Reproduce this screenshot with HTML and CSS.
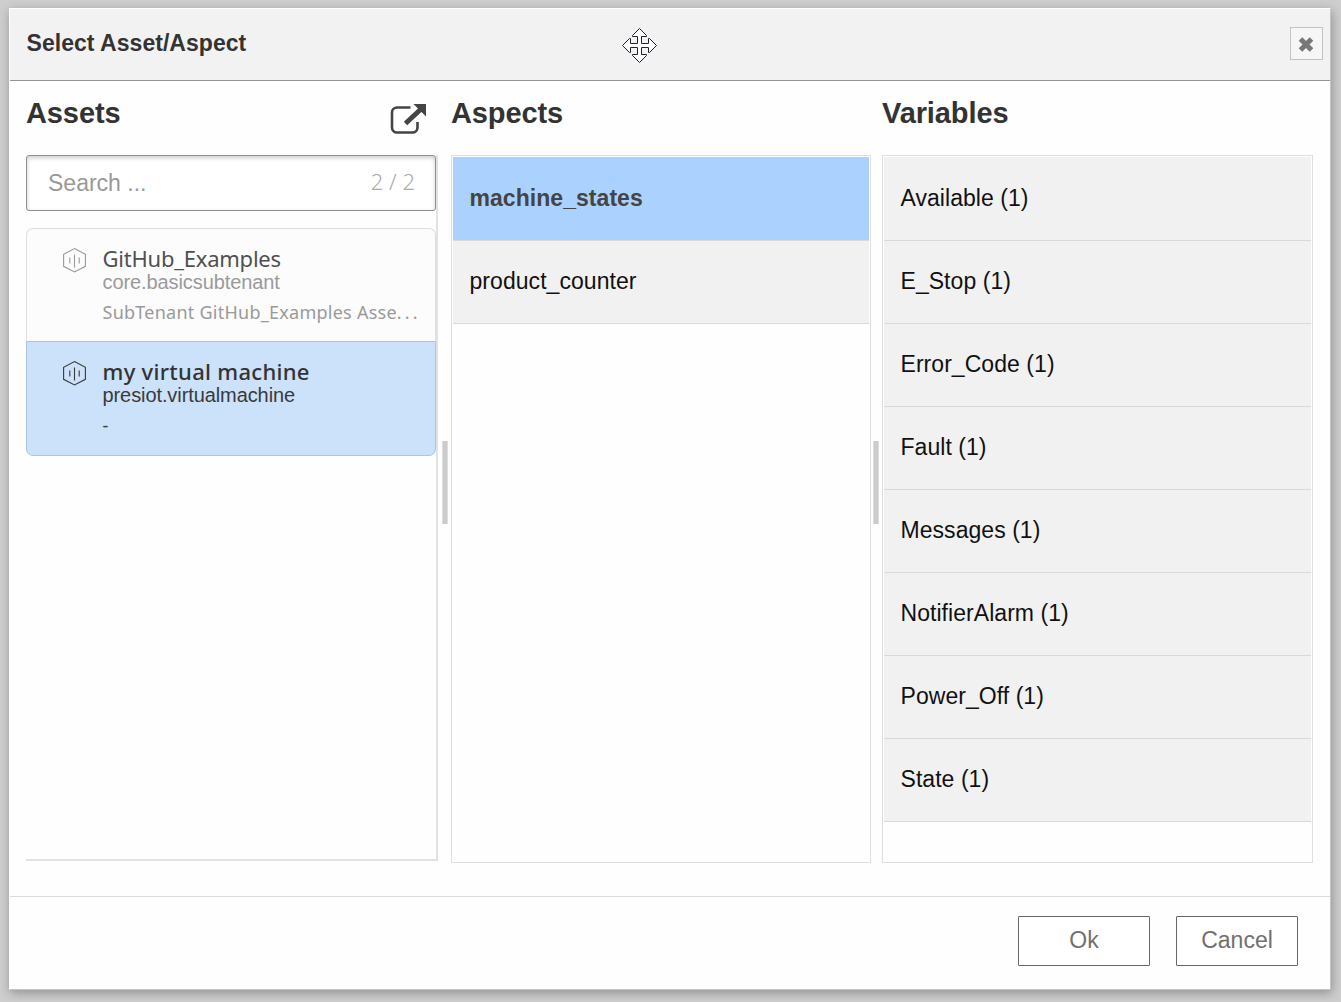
FILE: index.html
```html
<!DOCTYPE html>
<html lang="en">
<head>
<meta charset="utf-8">
<title>Select Asset/Aspect</title>
<link rel="stylesheet" href="styles.css">
</head>
<body>
<div class="dialog">
  <header class="dialog-header">
    <h1 class="dialog-title">Select Asset/Aspect</h1>
    <svg class="move-cursor" width="35" height="35" viewBox="0 0 35 35"><path d="M17.5.5 24.5 7.5V8.500H19.500V15.500H26.500V10.500H27.500L34.500 17.500 27.500 24.500H26.500V19.500H19.500V26.500H24.500V27.500L17.500 34.500 10.500 27.500V26.500H15.500V19.500H8.500V24.500H7.500L.5 17.500 7.500 10.500H8.500V15.500H15.500V8.500H10.500V7.500Z"/></svg>
    <button class="close" aria-label="Close"><svg width="17" height="17" viewBox="0 0 17 17"><path d="M2.500 3 13.500 14M13.500 3 2.500 14"/></svg></button>
  </header>
  <main class="dialog-body">
    <section class="column assets">
      <div class="column-head">
        <h2 class="column-title">Assets</h2>
        <svg class="open-icon" width="37" height="32" viewBox="0 0 37 32"><path class="frame" d="M20.500 4.500H7a5 5 0 0 0-5 5V24.500a5 5 0 0 0 5 5H22.500a5 5 0 0 0 5-5V19"/><path class="shaft" d="M15.500 20.500 30.500 6.500"/><path class="tip" d="M23.500 1H36V13.500Z"/></svg>
      </div>
      <div class="asset-panel">
        <div class="search"><span>Search ...</span><span class="count">2 / 2</span></div>
        <div class="asset-list">
          <article class="asset">
            <svg class="asset-icon" width="24" height="26" viewBox="0 0 24 26"><path d="M12.500 1.600 23.400 7.300V19.300L12.500 25 1.600 19.300V7.300ZM7.800 10.500V16.500M12.500 7.500V20.500M17.200 10.500V16.500"/></svg>
            <div class="asset-text">
              <div class="asset-name">GitHub_Examples</div>
              <div class="asset-type">core.basicsubtenant</div>
              <div class="asset-note">SubTenant GitHub_Examples Asse<span class="dots">...</span></div>
            </div>
          </article>
          <article class="asset selected">
            <svg class="asset-icon" width="24" height="26" viewBox="0 0 24 26"><path d="M12.500 1.600 23.400 7.300V19.300L12.500 25 1.600 19.300V7.300ZM7.800 10.500V16.500M12.500 7.500V20.500M17.200 10.500V16.500"/></svg>
            <div class="asset-text">
              <div class="asset-name">my virtual machine</div>
              <div class="asset-type">presiot.virtualmachine</div>
              <div class="asset-note">-</div>
            </div>
          </article>
        </div>
      </div>
    </section>
    <div class="splitter"><i></i></div>
    <section class="column aspects">
      <div class="column-head"><h2 class="column-title">Aspects</h2></div>
      <ul class="list">
        <li class="row selected">machine_states</li>
        <li class="row">product_counter</li>
      </ul>
    </section>
    <div class="splitter narrow"><i></i></div>
    <section class="column variables">
      <div class="column-head"><h2 class="column-title">Variables</h2></div>
      <ul class="list">
        <li class="row">Available (1)</li>
        <li class="row">E_Stop (1)</li>
        <li class="row">Error_Code (1)</li>
        <li class="row">Fault (1)</li>
        <li class="row">Messages (1)</li>
        <li class="row">NotifierAlarm (1)</li>
        <li class="row">Power_Off (1)</li>
        <li class="row">State (1)</li>
      </ul>
    </section>
  </main>
  <footer class="dialog-footer">
    <button class="btn ok">Ok</button>
    <button class="btn cancel">Cancel</button>
  </footer>
</div>
</body>
</html>
```
FILE: styles.css
```css
* { box-sizing: border-box; }
body {
  margin: 0;
  height: 1002px;
  padding: 8px 10px 12px 9px;
  overflow: hidden;
  background: #cecece;
  font-family: "Liberation Sans", Arial, sans-serif;
  font-size: 23px;
  color: #333;
}
h1, h2, ul { margin: 0; padding: 0; }
button { font: inherit; padding: 0; }
.dialog {
  display: flex;
  flex-direction: column;
  width: 1322px;
  height: 982px;
  background: #fefefe;
  border: 1px solid #fff;
  border-right-color: #c4c4c4;
  border-bottom-color: #c4c4c4;
  box-shadow: 1px 3px 10px rgba(0, 0, 0, .3);
}
.dialog-header {
  position: relative;
  display: flex;
  justify-content: space-between;
  height: 72px;
  padding: 18px 7px 0 16.5px;
  background: #f2f2f2;
  border-bottom: 1px solid #959595;
}
.dialog-title { font-size: 23px; line-height: 32px; letter-spacing: .04px; }
.move-cursor { position: absolute; left: 612px; top: 19px; fill: #fff; stroke: #222230; stroke-width: 1; }
.close {
  display: grid;
  place-items: center;
  width: 33px;
  height: 33px;
  padding: 2px 1px 0 0;
  background: #f6f6f6;
  border: 1px solid #c3c3c3;
}
.close svg { display: block; stroke: #777; stroke-width: 5; }
.dialog-body { display: flex; height: 815px; padding-left: 16px; }
.column-head { display: flex; justify-content: space-between; height: 74px; padding-right: 11px; }
.column-title { padding-top: 14px; font-size: 29px; line-height: 36px; letter-spacing: -.1px; }
.open-icon { margin-top: 22px; fill: none; stroke: #444; }
.frame { stroke-width: 2.600; }
.shaft { stroke-width: 5; }
.tip { fill: #444; stroke: none; }
.assets { width: 412px; }
.aspects { width: 420px; }
.variables { width: 431px; }
.asset-panel {
  height: 706px;
  border-right: 2px solid #e2e2e2;
  border-bottom: 2px solid #e2e2e2;
}
.search {
  display: flex;
  justify-content: space-between;
  height: 56px;
  padding: 0 20px 0 21px;
  line-height: 54px;
  color: #999;
  background: #fff;
  border: 1px solid #8e8e8e;
  border-radius: 3px;
  box-shadow: inset 0 2px 4px rgba(0, 0, 0, .2);
}
.count { font-family: "Noto Sans", sans-serif; font-weight: 300; font-size: 22px; line-height: 51px; color: #aaa; }
.asset-list { margin-top: 17px; }
.asset {
  display: flex;
  height: 113px;
  padding: 17px 0 0 35px;
  background: #fcfcfc;
  border: 1px solid #dedede;
  border-bottom: 0;
  border-radius: 7px 7px 0 0;
  color: #9a9a9a;
}
.asset.selected {
  height: 115px;
  background: #cce1fa;
  border: 1px solid #a9c6e3;
  border-radius: 0 0 7px 7px;
  color: #3a3a3a;
}
.asset-icon { flex: none; margin-top: 1px; fill: none; stroke: currentColor; stroke-width: 1.100; }
.asset-text { margin-left: 16.5px; white-space: nowrap; }
.asset-name {
  font-family: "Noto Sans", sans-serif;
  font-size: 22px;
  font-weight: 400;
  line-height: 24px;
  letter-spacing: -.23px;
  color: #505050;
}
.selected .asset-name { font-weight: 500; letter-spacing: .3px; color: #333; }
.asset-type { margin-top: 1px; font-size: 20px; line-height: 22px; letter-spacing: -.09px; }
.asset-note {
  margin-top: 6px;
  font-family: "Noto Sans", sans-serif;
  font-size: 18px;
  line-height: 26px;
  letter-spacing: .25px;
}
.dots { letter-spacing: 3.2px; }
.splitter { display: flex; justify-content: flex-end; width: 13px; padding: 360px 3px 0 0; }
.splitter.narrow { width: 11px; padding-right: 3px; }
.splitter i { width: 6px; height: 83px; background: #ccc; border: solid #ddd; border-width: 0 1px; }
.list { height: 708px; padding: 1px; list-style: none; border: 1px solid #dedede; }
.row {
  height: 83px;
  padding: 0 16.5px;
  line-height: 80px;
  letter-spacing: .05px;
  color: #111;
  background: #f1f1f1;
  border-bottom: 1px solid #d9d9d9;
}
.row:first-child { height: 84px; line-height: 82px; }
.row.selected { font-weight: 700; color: #444; background: #abd1fe; }
.dialog-footer {
  display: flex;
  justify-content: flex-end;
  gap: 26px;
  flex: 1;
  padding: 19px 32px 0;
  border-top: 1px solid #dcdcdc;
}
.btn {
  height: 50px;
  padding-bottom: 2px;
  background: #fff;
  border: 1px solid #666;
  border-radius: 1px;
  color: #707070;
}
.ok { width: 132px; }
.cancel { width: 122px; }
```
